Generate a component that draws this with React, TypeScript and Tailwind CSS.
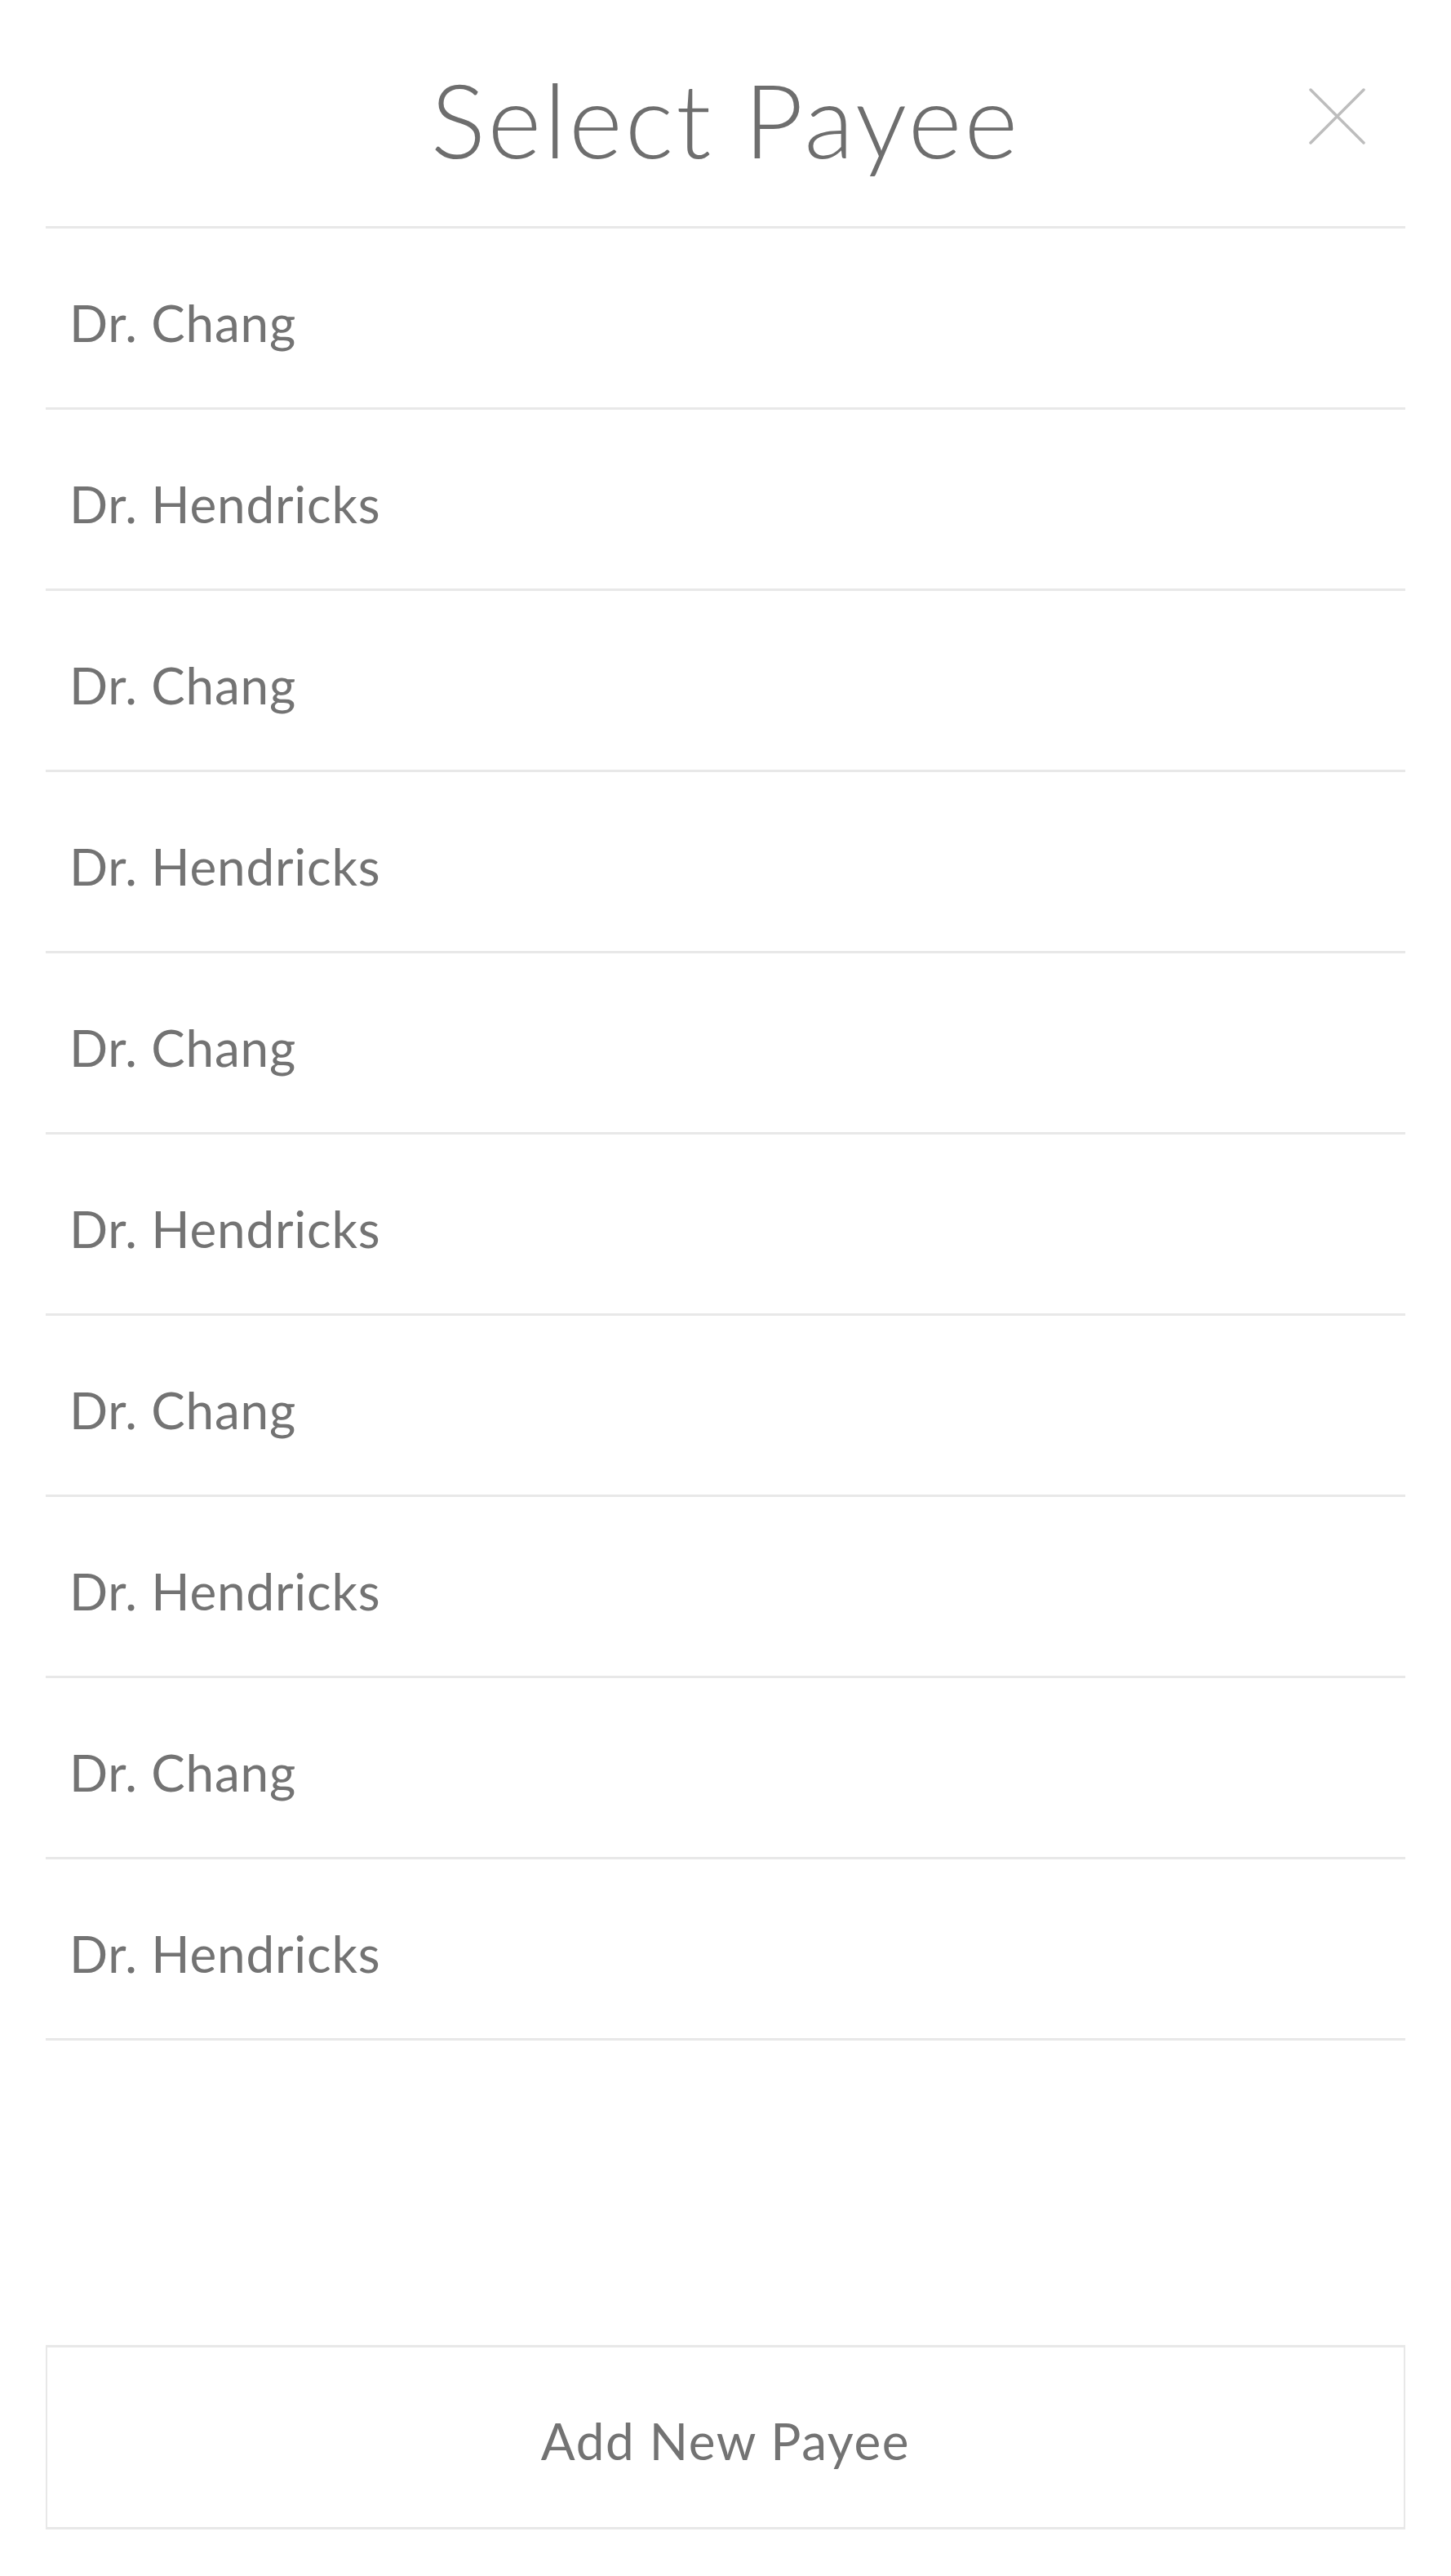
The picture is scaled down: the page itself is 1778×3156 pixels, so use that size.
const payees = [
  'Dr. Chang',
  'Dr. Hendricks',
  'Dr. Chang',
  'Dr. Hendricks',
  'Dr. Chang',
  'Dr. Hendricks',
  'Dr. Chang',
  'Dr. Hendricks',
  'Dr. Chang',
  'Dr. Hendricks',
];

export default function App() {
  return (
    <div className="flex min-h-[3156px] flex-col bg-white px-[56px] font-['Lato','Noto_Sans',sans-serif] text-[#737373]">
      <header className="relative flex h-[277px] items-center justify-center pt-[14px]">
        <h1 className="text-[126px] font-light leading-none tracking-[3px] text-[#6e6e6e]">Select Payee</h1>
        <button className="absolute right-[49px] top-[108px]" aria-label="Close">
          <svg width="69" height="69" viewBox="0 0 69 69" fill="none" stroke="#bdbdbd" strokeWidth="3.5" strokeLinecap="round">
            <line x1="2" y1="2" x2="67" y2="67" />
            <line x1="67" y1="2" x2="2" y2="67" />
          </svg>
        </button>
      </header>

      <ul className="border-t-[3px] border-[#e8e8e8]">
        {payees.map((name, i) => (
          <li
            key={i}
            className="flex h-[222px] items-center border-b-[3px] border-[#e8e8e8] pl-[29px] pt-[10px] text-[62px] leading-none tracking-[0.8px]"
          >
            {name}
          </li>
        ))}
      </ul>

      <div className="flex-1" />

      <button className="mb-[57px] flex h-[226px] items-center justify-center border-x-2 border-y-[3px] border-[#e8e8e8] pt-[8px] text-[62px] leading-none tracking-[1.6px] text-[#737373]">
        Add New Payee
      </button>
    </div>
  );
}
